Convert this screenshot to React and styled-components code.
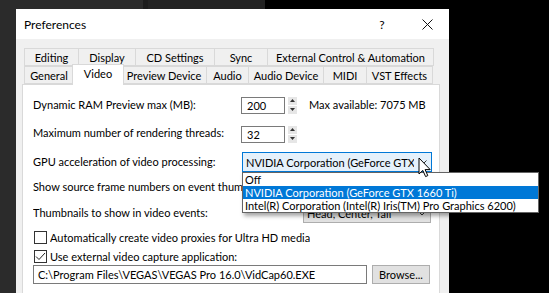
import React from "react";
import styled, { createGlobalStyle } from "styled-components";

const Global = createGlobalStyle`
  html, body { margin: 0; padding: 0; background: #000; }
  * { box-sizing: border-box; }
`;

const FONT = `Lato, "Noto Sans", sans-serif`;

const Page = styled.div`
  width: 549px;
  height: 293px;
  overflow: hidden;
  background: #000;
  display: flex;
  flex-direction: column;
  font-family: ${FONT};
  font-size: 11px;
  color: #000;
`;

const TopStrip = styled.div`
  height: 9px;
  display: flex;
  flex-shrink: 0;
`;

const Segment = styled.div`
  width: ${(p) => p.$w}px;
  flex: ${(p) => (p.$grow ? 1 : "none")};
  background: ${(p) => p.$c};
`;

const Main = styled.div`
  flex: 1;
  display: flex;
  min-height: 0;
`;

const Gutter = styled.div`
  width: 16px;
  background: #2b2b2b;
`;

const Dialog = styled.div`
  width: 433px;
  background: #f0f0f0;
  display: flex;
  flex-direction: column;
`;

const TitleBar = styled.div`
  height: 30px;
  flex-shrink: 0;
  background: #fff;
  display: flex;
  align-items: center;
  padding-left: 8px;
  padding-right: 12px;
`;

const Title = styled.div`
  flex: 1;
  font-size: 12px;
`;

const TitleBtn = styled.div`
  width: ${(p) => p.$w}px;
  margin-left: ${(p) => p.$ml || 0}px;
  display: flex;
  justify-content: center;
  align-items: center;
  font-size: 12px;
`;

const Body = styled.div`
  flex: 1;
  display: flex;
  flex-direction: column;
  padding: 9px 9px 0 6px;
`;

const TabStrip = styled.div`
  display: flex;
  flex-direction: column;
  padding: 0 2px;
  position: relative;
  z-index: 2;
`;

const TabRow = styled.div`
  display: flex;
  height: 18px;
`;

const Tab = styled.div`
  width: ${(p) => p.$w}px;
  height: 18px;
  flex: none;
  border: 1px solid #d9d9d9;
  margin-left: -1px;
  &:first-child { margin-left: 0; }
  background: #f0f0f0;
  display: flex;
  align-items: center;
  justify-content: center;
  white-space: nowrap;
  line-height: 1;
`;

const ActiveTab = styled(Tab)`
  width: ${(p) => p.$w + 4}px;
  height: 21px;
  margin: -2px -2px -1px -2px;
  background: #fff;
  border-bottom: none;
  position: relative;
  z-index: 1;
  padding-bottom: 3px;
`;

const Panel = styled.div`
  flex: 1;
  background: #fff;
  border: 1px solid #d9d9d9;
  border-bottom: none;
  padding: 10px 0 0 10px;
  display: flex;
  flex-direction: column;
`;

const Row = styled.div`
  height: ${(p) => p.$h}px;
  margin-top: ${(p) => p.$mt || 0}px;
  display: flex;
  align-items: center;
  flex-shrink: 0;
  position: relative;
`;

const Label = styled.div`
  width: ${(p) => (p.$w ? `${p.$w}px` : "auto")};
  flex: none;
  white-space: nowrap;
  overflow: hidden;
  padding-bottom: ${(p) => p.$pb || 0}px;
`;

const Edit = styled.div`
  width: ${(p) => p.$w}px;
  height: ${(p) => p.$h || 17}px;
  border: 1px solid #7a7a7a;
  background: #fff;
  display: flex;
  align-items: center;
  padding-left: ${(p) => p.$pl || 5}px;
  white-space: nowrap;
  overflow: hidden;
`;

const Spinner = styled.div`
  width: 9px;
  height: 17px;
  margin-left: 3px;
  display: flex;
  flex-direction: column;
  gap: 1px;
`;

const SpinHalf = styled.div`
  flex: 1;
  background: #e6e6e6;
  display: flex;
  align-items: center;
  justify-content: center;
`;

const Hint = styled.div`
  margin-left: 12px;
  padding-bottom: 1px;
  white-space: nowrap;
`;

const Select = styled.div`
  position: relative;
  width: ${(p) => p.$w}px;
  height: 20px;
  margin-left: ${(p) => p.$ml || 0}px;
  border: 1px solid ${(p) => (p.$open ? "#0078d7" : "#adadad")};
  background: ${(p) => (p.$open ? "#e5f1fb" : "#e1e1e1")};
  display: flex;
  align-items: center;
  padding-left: 3px;
`;

const SelectText = styled.div`
  flex: 1;
  white-space: nowrap;
  overflow: hidden;
`;

const Chevron = styled.div`
  width: 17px;
  display: flex;
  justify-content: center;
`;

const DropList = styled.div`
  position: absolute;
  left: -1px;
  top: 19px;
  width: 297px;
  border: 1px solid #646464;
  background: #fff;
  box-shadow: 2px 3px 4px rgba(0, 0, 0, 0.35);
  z-index: 10;
  display: flex;
  flex-direction: column;
`;

const DropItem = styled.div`
  height: 13px;
  line-height: 13px;
  padding-left: 2px;
  white-space: nowrap;
  background: ${(p) => (p.$sel ? "#0078d7" : "#fff")};
  color: ${(p) => (p.$sel ? "#fff" : "#000")};
`;

const Cursor = styled.svg`
  position: absolute;
  left: 175px;
  top: 4px;
  z-index: 20;
`;

const CheckBox = styled.div`
  width: 13px;
  height: 13px;
  margin-left: 1px;
  margin-right: 3px;
  border: 1px solid #333;
  background: #fff;
  display: flex;
  align-items: center;
  justify-content: center;
`;

const Button = styled.div`
  width: 58px;
  height: 19px;
  margin-left: 5px;
  border: 1px solid #adadad;
  background: #e1e1e1;
  display: flex;
  align-items: center;
  justify-content: center;
  white-space: nowrap;
`;

const row1 = [
  ["Editing", 55],
  ["Display", 58],
  ["CD Settings", 80],
  ["Sync", 54],
  ["External Control & Automation", 167],
];
const row2 = [
  ["General", 50],
  ["Video", 48, true],
  ["Preview Device", 86],
  ["Audio", 43],
  ["Audio Device", 76],
  ["MIDI", 44],
  ["VST Effects", 67],
];

const Up = () => (
  <svg width="5" height="3" viewBox="0 0 5 3">
    <path d="M0 3 L2.5 0 L5 3 Z" fill="#333" />
  </svg>
);
const Down = () => (
  <svg width="5" height="3" viewBox="0 0 5 3">
    <path d="M0 0 L2.5 3 L5 0 Z" fill="#333" />
  </svg>
);
const Chev = () => (
  <svg width="8" height="5" viewBox="0 0 8 5">
    <path d="M0.5 0.5 L4 4 L7.5 0.5" fill="none" stroke="#333" strokeWidth="1" />
  </svg>
);

function Spin() {
  return (
    <Spinner>
      <SpinHalf>
        <Up />
      </SpinHalf>
      <SpinHalf>
        <Down />
      </SpinHalf>
    </Spinner>
  );
}

export default function App() {
  return (
    <>
      <Global />
      <Page>
        <TopStrip>
          <Segment $w={143} $c="#2b2b2b" />
          <Segment $w={5} $c="#1c1c1c" />
          <Segment $w={117} $c="#222222" />
          <Segment $grow $c="#000" />
        </TopStrip>
        <Main>
          <Gutter />
          <Dialog>
            <TitleBar>
              <Title>Preferences</Title>
              <TitleBtn $w={22}>?</TitleBtn>
              <TitleBtn $w={20} $ml={24}>
                <svg width="11" height="11" viewBox="0 0 11 11">
                  <path d="M0.5 0.5 L10.5 10.5 M10.5 0.5 L0.5 10.5" stroke="#111" strokeWidth="1" />
                </svg>
              </TitleBtn>
            </TitleBar>
            <Body>
              <TabStrip>
                <TabRow>
                  {row1.map(([t, w]) => (
                    <Tab key={t} $w={w}>{t}</Tab>
                  ))}
                </TabRow>
                <TabRow>
                  {row2.map(([t, w, a]) =>
                    a ? (
                      <ActiveTab key={t} $w={w}>{t}</ActiveTab>
                    ) : (
                      <Tab key={t} $w={w}>{t}</Tab>
                    )
                  )}
                </TabRow>
              </TabStrip>
              <Panel>
                <Row $h={20}>
                  <Label $w={208} $pb={2}>Dynamic RAM Preview max (MB):</Label>
                  <Edit $w={44}>200</Edit>
                  <Spin />
                  <Hint>Max available: 7075 MB</Hint>
                </Row>
                <Row $h={20} $mt={9}>
                  <Label $w={208} $pb={4}>Maximum number of rendering threads:</Label>
                  <Edit $w={44}>32</Edit>
                  <Spin />
                </Row>
                <Row $h={20} $mt={8}>
                  <Label $w={209} $pb={2}>GPU acceleration of video processing:</Label>
                  <Select $w={190} $open>
                    <SelectText>NVIDIA Corporation (GeForce GTX 1660 Ti)</SelectText>
                    <Chevron>
                      <Chev />
                    </Chevron>
                    <Cursor width="14" height="21" viewBox="0 0 14 21">
                      <path
                        d="M1 1 L1 17 L4.8 13.4 L7.6 19.6 L9.8 18.6 L7.1 12.6 L12.2 12.6 Z"
                        fill="#fff"
                        stroke="#000"
                        strokeWidth="1"
                        strokeLinejoin="miter"
                      />
                    </Cursor>
                    <DropList>
                      <DropItem>Off</DropItem>
                      <DropItem $sel>NVIDIA Corporation (GeForce GTX 1660 Ti)</DropItem>
                      <DropItem>Intel(R) Corporation (Intel(R) Iris(TM) Pro Graphics 6200)</DropItem>
                    </DropList>
                  </Select>
                </Row>
                <Row $h={20} $mt={5}>
                  <Label $w={209} $pb={2}>Show source frame numbers on event thumbnails as:</Label>
                </Row>
                <Row $h={20} $mt={6}>
                  <Label $w={270} $pb={2}>Thumbnails to show in video events:</Label>
                  <Select $w={128}>
                    <SelectText>Head, Center, Tail</SelectText>
                    <Chevron>
                      <Chev />
                    </Chevron>
                  </Select>
                </Row>
                <Row $h={19} $mt={5}>
                  <CheckBox />
                  <Label>Automatically create video proxies for Ultra HD media</Label>
                </Row>
                <Row $h={18}>
                  <CheckBox>
                    <svg width="11" height="9" viewBox="0 0 11 9">
                      <path d="M1 4.5 L4 7.5 L10 1" fill="none" stroke="#222" strokeWidth="1" />
                    </svg>
                  </CheckBox>
                  <Label>Use external video capture application:</Label>
                </Row>
                <Row $h={19}>
                  <Edit $w={334} $h={19} $pl={4}>
                    C:\Program Files\VEGAS\VEGAS Pro 16.0\VidCap60.EXE
                  </Edit>
                  <Button>Browse...</Button>
                </Row>
              </Panel>
            </Body>
          </Dialog>
        </Main>
      </Page>
    </>
  );
}
